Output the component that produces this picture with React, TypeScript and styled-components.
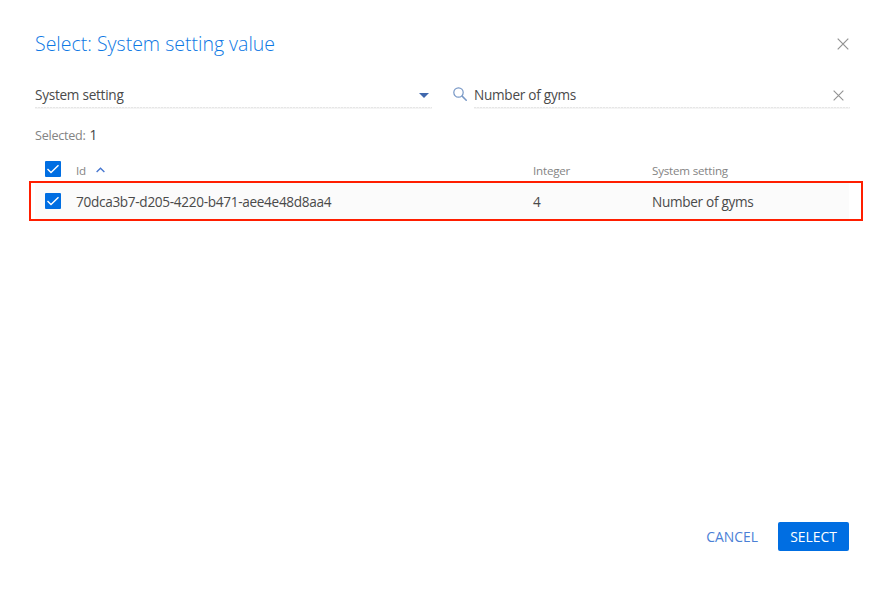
import React from 'react';
import styled, { createGlobalStyle } from 'styled-components';

const GlobalStyle = createGlobalStyle`
  *, *::before, *::after { box-sizing: border-box; }
  body { margin: 0; background: #fff; font-family: "Open Sans", sans-serif; color: #4a4a4a; }
  button { font: inherit; border: 0; padding: 0; background: none; }
`;

const Dialog = styled.main`
  width: 889px;
  height: 600px;
  padding: 28px 26px 49px 29px;
  display: flex;
  flex-direction: column;
  background: #fff;
`;
const Header = styled.header`
  height: 32px;
  padding: 0 14px 0 6px;
  display: flex;
  align-items: center;
  justify-content: space-between;
`;
const Title = styled.h1`
  margin: 0;
  font-size: 19.5px;
  line-height: 32px;
  font-weight: 300;
  color: #0d78e4;
`;
const IconButton = styled.button`
  display: flex;
`;
const Filters = styled.div`
  height: 28px;
  margin: 21px 13px 0 6px;
  display: flex;
`;
const Field = styled.div<{ $width: number; $end: number }>`
  width: ${(p) => p.$width}px;
  height: 28px;
  padding: 2px ${(p) => p.$end}px 2px 0;
  display: flex;
  align-items: center;
  justify-content: space-between;
  background: repeating-linear-gradient(90deg, #e6e6e6 0 2px, #f6f6f6 2px 3px) left 0 bottom 1px / 100% 1px no-repeat,
    linear-gradient(#f4f4f4, #f4f4f4) left bottom / 100% 2px no-repeat;
  font-size: 13.6px;
  letter-spacing: -0.27px;
  line-height: 24px;
`;
const SearchIcon = styled.span`
  width: 21px;
  margin-left: 21px;
  padding-top: 6px;
  display: flex;
  align-items: flex-start;
`;
const Summary = styled.div`
  margin: 16px 0 0 6px;
  display: flex;
  gap: 4px;
  height: 20px;
  align-items: center;
  font-size: 12.6px;
  letter-spacing: -0.25px;
  color: #848484;
`;
const Count = styled.span`
  font-size: 13.6px;
  line-height: 18px;
  padding-bottom: 1px;
  color: #444;
`;
const Row = styled.div<{ $head?: boolean }>`
  display: grid;
  grid-template-columns: 31px 457px 119px 1fr;
  align-items: center;
  height: ${(p) => (p.$head ? 24 : 40)}px;
  margin-top: ${(p) => (p.$head ? 12 : 0)}px;
  padding-left: ${(p) => (p.$head ? 16 : 14)}px;
  border: ${(p) => (p.$head ? '0' : '2px solid #ff1e00')};
  background: ${(p) => (p.$head ? '#fff' : 'linear-gradient(#fbfbfb, #fbfbfb) 4px 0 / 814px 100% no-repeat')};
  font-size: ${(p) => (p.$head ? 11.6 : 13.6)}px;
  letter-spacing: ${(p) => (p.$head ? -0.2 : -0.31)}px;
  color: ${(p) => (p.$head ? '#848484' : '#4a4a4a')};
`;
const Cell = styled.span<{ $head?: boolean }>`
  display: flex;
  align-items: center;
  gap: 10px;
  padding-top: ${(p) => (p.$head ? 3 : 1)}px;
  white-space: nowrap;
`;
const Box = styled.span`
  width: 16px;
  height: 16px;
  display: flex;
  border-radius: 1px;
  background: #006ee2;
`;
const Footer = styled.footer`
  margin-top: auto;
  padding-right: 14px;
  display: flex;
  justify-content: flex-end;
  gap: 20px;
`;
const Action = styled.button<{ $primary?: boolean }>`
  width: ${(p) => (p.$primary ? '71px' : 'auto')};
  height: 29px;
  border-radius: 2px;
  font-size: 13.9px;
  color: ${(p) => (p.$primary ? '#fff' : '#4b7fd6')};
  background: ${(p) => (p.$primary ? '#006ee2' : 'transparent')};
`;

const Cross = ({ size }: { size: number }) => (
  <svg width={size} height={size} viewBox="0 0 12 12" stroke="#929292" strokeWidth="1.2" fill="none">
    <path d="M.7.7l10.6 10.6M11.3.7L.7 11.3" />
  </svg>
);
const Checkbox = () => (
  <Box role="checkbox" aria-checked="true">
    <svg width="16" height="16" viewBox="0 0 16 16" fill="none" stroke="#fff" strokeWidth="1.4">
      <path d="M2.5 8l3.5 3.5 7.5-7.3" />
    </svg>
  </Box>
);
const SortIcon = styled.svg`
  margin: -2px 0 0 0;
`;

export default function App() {
  return (
    <>
      <GlobalStyle />
      <Dialog>
        <Header>
          <Title>Select: System setting value</Title>
          <IconButton aria-label="Close"><Cross size={12} /></IconButton>
        </Header>
        <Filters>
          <Field $width={397} $end={3}>
            System setting
            <svg width="10" height="5" viewBox="0 0 10 5"><path d="M0 0h10L5 5z" fill="#4068ad" /></svg>
          </Field>
          <SearchIcon>
            <svg width="14" height="14" viewBox="0 0 14 14" fill="none" stroke="#7898c6">
              <circle cx="5.5" cy="5.5" r="4.7" strokeWidth="1.2" />
              <path d="M8.9 8.9l4.8 4.8" strokeWidth="1.5" />
            </svg>
          </SearchIcon>
          <Field $width={376} $end={6}>
            Number of gyms
            <IconButton aria-label="Clear"><Cross size={11} /></IconButton>
          </Field>
        </Filters>
        <Summary>Selected: <Count>1</Count></Summary>
        <Row $head>
          <Checkbox />
          <Cell $head>Id
            <SortIcon width="9" height="6" viewBox="0 0 10 6" fill="none" stroke="#4676d0" strokeWidth="1.5"><path d="M.7 5.3L5 1l4.3 4.3" /></SortIcon>
          </Cell>
          <Cell $head>Integer</Cell>
          <Cell $head>System setting</Cell>
        </Row>
        <Row>
          <Checkbox />
          <Cell>70dca3b7-d205-4220-b471-aee4e48d8aa4</Cell>
          <Cell>4</Cell>
          <Cell>Number of gyms</Cell>
        </Row>
        <Footer>
          <Action>CANCEL</Action>
          <Action $primary>SELECT</Action>
        </Footer>
      </Dialog>
    </>
  );
}
